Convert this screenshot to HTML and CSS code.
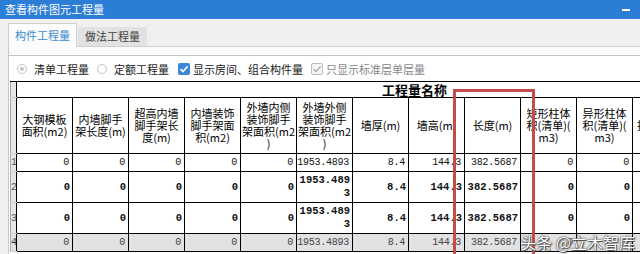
FILE: index.html
```html
<!DOCTYPE html>
<html lang="zh-CN">
<head>
    <meta charset="UTF-8">
    <title>查看构件图元工程量</title>
    <link rel="stylesheet" href="styles.css">
</head>
<body>
<div class="titlebar">
    <span>查看构件图元工程量</span>
    <span class="min"></span>
</div>
<div class="tabs">
    <div class="tab active">构件工程量</div>
    <div class="tab">做法工程量</div>
</div>
<div class="panel">
    <div class="inner">
        <div class="options">
            <span class="radio on"></span><span class="label">清单工程量</span>
            <span class="radio"></span><span class="label">定额工程量</span>
            <span class="check"><svg width="12" height="12" viewBox="0 0 12 12"><path d="M2.5 6.2 L5 8.6 L9.6 3.4" fill="none" stroke="#fff" stroke-width="1.6"/></svg></span><span class="label tight">显示房间、组合构件量</span>
            <span class="check off"><svg width="12" height="12" viewBox="0 0 12 12"><path d="M2.5 6.2 L5 8.6 L9.6 3.4" fill="none" stroke="#a8a8a8" stroke-width="1.4"/></svg></span><span class="label tight muted">只显示标准层单层量</span>
        </div>
        <div class="grid-wrap">
            <table class="grid">
                <colgroup>
                    <col class="rh">
                    <col class="c"><col class="c"><col class="c"><col class="c"><col class="c"><col class="c">
                    <col class="c"><col class="c"><col class="c"><col class="c"><col class="c"><col class="c">
                </colgroup>
                <thead>
                <tr class="group">
                    <th class="rh"></th>
                    <th colspan="12">工程量名称</th>
                </tr>
                <tr class="names">
                    <th class="rh"></th>
                    <th>大钢模板<br>面积(m2)</th>
                    <th>内墙脚手<br>架长度(m)</th>
                    <th>超高内墙<br>脚手架长<br>度(m)</th>
                    <th>内墙装饰<br>脚手架面<br>积(m2)</th>
                    <th>外墙内侧<br>装饰脚手<br>架面积(m2<br>)</th>
                    <th>外墙外侧<br>装饰脚手<br>架面积(m2<br>)</th>
                    <th>墙厚(m)</th>
                    <th>墙高(m)</th>
                    <th>长度(m)</th>
                    <th>矩形柱体<br>积(清单)(<br>m3)</th>
                    <th>异形柱体<br>积(清单)(<br>m3)</th>
                    <th class="tail">&nbsp;<br>抹灰面积<br>&nbsp;</th>
                </tr>
                </thead>
                <tbody>
                <tr>
                    <th class="rh">1</th>
                    <td>0</td><td>0</td><td>0</td><td>0</td><td>0</td>
                    <td>1953.4893</td><td>8.4</td><td>144.3</td><td>382.5687</td>
                    <td>0</td><td>0</td><td></td>
                </tr>
                <tr class="strong">
                    <th class="rh">2</th>
                    <td>0</td><td>0</td><td>0</td><td>0</td><td>0</td>
                    <td>1953.4893</td><td>8.4</td><td>144.3</td><td>382.5687</td>
                    <td>0</td><td>0</td><td></td>
                </tr>
                <tr class="strong">
                    <th class="rh">3</th>
                    <td>0</td><td>0</td><td>0</td><td>0</td><td>0</td>
                    <td>1953.4893</td><td>8.4</td><td>144.3</td><td>382.5687</td>
                    <td>0</td><td>0</td><td></td>
                </tr>
                <tr class="sel">
                    <th class="rh">4</th>
                    <td>0</td><td>0</td><td>0</td><td>0</td><td>0</td>
                    <td>1953.4893</td><td>8.4</td><td>144.3</td><td>382.5687</td>
                    <td>0</td><td>0</td><td></td>
                </tr>
                </tbody>
            </table>
        </div>
    </div>
</div>
<div class="mark"></div>
<div class="watermark">头条 @立木智库</div>
</body>
</html>
```

FILE: styles.css
```css
* {
    box-sizing: border-box;
}
html {
    overflow: hidden;
}
body {
    margin: 0;
    width: 640px;
    height: 254px;
    overflow: hidden;
    position: relative;
    background-color: #f0f0f0;
    font-family: "Noto Sans CJK SC", "Noto Sans", sans-serif;
}
.titlebar {
    height: 19px;
    padding-left: 5px;
    display: flex;
    justify-content: space-between;
    background-color: #2b7dd6;
    color: #fff;
    font-size: 11px;
    line-height: 19px;
}
.min {
    width: 8px;
    height: 2px;
    margin: 9px 10px 0 0;
    background-color: #fff;
}
.tabs {
    height: 27px;
    padding-left: 8px;
    display: flex;
    align-items: flex-end;
}
.tab {
    height: 19px;
    padding: 0 7px;
    margin-left: 1px;
    background-color: #e2e2e2;
    color: #444;
    font-size: 11px;
    line-height: 19px;
}
.tab.active {
    height: 24px;
    padding: 0 6px;
    margin: 0 0 -1px 0;
    line-height: 22px;
    background-color: #fcfcfc;
    color: #3a8bd0;
    border: 1px solid #d0d0d0;
    border-bottom: none;
    position: relative;
}
.panel {
    height: 208px;
    margin-left: 8px;
    padding-top: 8px;
    border-top: 1px solid #d0d0d0;
    border-left: 1px solid #c8c8c8;
    background-color: #fbfbfb;
    overflow: hidden;
}
.inner {
    height: 100%;
    border-top: 1px solid #c4c4c4;
    background-color: #fff;
    overflow: hidden;
}
.options {
    height: 25px;
    display: flex;
    align-items: center;
    font-size: 11px;
    color: #222;
}
.radio {
    width: 10px;
    height: 10px;
    margin-left: 8px;
    border: 1px solid #c4c4c4;
    border-radius: 50%;
    display: flex;
    align-items: center;
    justify-content: center;
}
.radio.on::after {
    content: "";
    width: 4px;
    height: 4px;
    border-radius: 50%;
    background-color: #c2c2c2;
}
.label {
    margin-left: 7px;
}
.label.tight {
    margin-left: 3px;
}
.label.muted {
    color: #888;
}
.check {
    width: 12px;
    height: 12px;
    margin-left: 9px;
    border-radius: 2px;
    background-color: #3c87d9;
    display: flex;
}
.check.off {
    margin-left: 8px;
    background-color: #f6f6f6;
    border: 1px solid #bdbdbd;
}
.check.off svg {
    margin: -1px;
}
.grid-wrap {
    margin-left: 1px;
    overflow: hidden;
}
.grid {
    border-collapse: collapse;
    table-layout: fixed;
    width: 678px;
}
.grid col.rh {
    width: 6px;
}
.grid col.c {
    width: 56px;
}
.grid th,
.grid td {
    border: 1px solid #000;
    overflow: hidden;
    white-space: nowrap;
}
.grid thead th {
    font-weight: normal;
    font-size: 11px;
    line-height: 12px;
    color: #000;
    text-align: center;
    padding: 3px 0 4px;
}
.grid .group th {
    font-weight: bold;
    font-size: 13px;
    line-height: 15px;
    padding: 0 0 0 124px;
}
.grid th.rh {
    padding: 0;
    background-color: #e6e6e6;
    border-left: 1px solid #a8a8a8;
    border-top-color: #d0d0d0;
    border-bottom-color: #d0d0d0;
    color: #555;
    font-family: "Liberation Mono", monospace;
    font-size: 10px;
    font-weight: normal;
    text-align: left;
    line-height: 13px;
}
.grid .group th.rh {
    padding: 0;
    border-top-color: #000;
}
.grid th.tail {
    text-align: left;
    padding-left: 4px;
}
.grid td {
    padding: 2px 3px 2px 0;
    text-align: right;
    font-family: "Liberation Mono", monospace;
    font-size: 10px;
    letter-spacing: -0.25px;
    line-height: 13px;
    color: #111;
}
.grid .strong td {
    font-weight: bold;
    font-size: 10.5px;
    letter-spacing: 0;
    white-space: normal;
    word-break: break-all;
    padding-right: 2px;
}
.grid .sel td,
.grid .sel th.rh {
    background-color: #e2e2e2;
    color: #444;
}
.mark {
    position: absolute;
    left: 453px;
    top: 89px;
    width: 82px;
    height: 165px;
    border: 3px solid #c44b4b;
    border-bottom: none;
}
.watermark {
    position: absolute;
    right: 5px;
    bottom: 2px;
    color: #fff;
    font-size: 16px;
    line-height: 20px;
    text-shadow: 0 0 1px #333, 0 0 2px #555, 1px 1px 1px #444;
}
```
